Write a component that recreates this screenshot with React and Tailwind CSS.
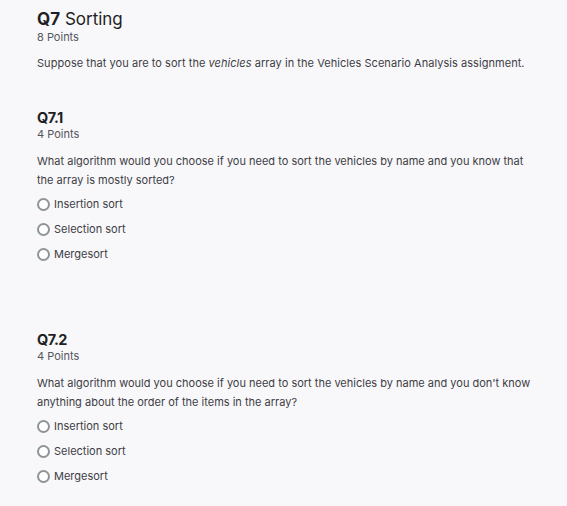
const font = { fontFamily: "Inter, 'Liberation Sans', sans-serif" };

function Radio({ label }) {
  return (
    <label className="flex items-center h-[25px] gap-[4px] text-[11px] text-[#3d3d45]">
      <span className="w-[13px] h-[13px] rounded-full border-2 border-[#8e949a] bg-white shrink-0" />
      <span>{label}</span>
    </label>
  );
}

function SubQuestion({ num, points, text }) {
  return (
    <div>
      <h3 className="text-[14.5px] font-bold text-[#1f1f24] leading-[18px] tracking-[-0.5px]">{num}</h3>
      <div className="text-[11px] text-[#55555c] leading-[14px]">{points}</div>
      <p className="mt-[11px] text-[11px] leading-[19px] text-[#3d3d45]">{text}</p>
      <div className="mt-[2px]">
        <Radio label="Insertion sort" />
        <Radio label="Selection sort" />
        <Radio label="Mergesort" />
      </div>
    </div>
  );
}

export default function App() {
  return (
    <div className="min-h-[506px] bg-[#f8f8fa] pl-[37px] pr-[30px] pt-[8px]" style={font}>
      <h2 className="text-[17px] leading-[22px] text-[#1f1f24]">
        <span className="font-bold">Q7</span> Sorting
      </h2>
      <div className="text-[11px] text-[#55555c] leading-[14px]">8 Points</div>
      <p className="mt-[12px] text-[11px] text-[#3d3d45] leading-[14px] tracking-[0.05px]">
        Suppose that you are to sort the <em>vehicles</em> array in the Vehicles Scenario Analysis assignment.
      </p>
      <div className="mt-[39px]">
        <SubQuestion
          num="Q7.1"
          points="4 Points"
          text="What algorithm would you choose if you need to sort the vehicles by name and you know that the array is mostly sorted?"
        />
      </div>
      <div className="mt-[64px]">
        <SubQuestion
          num="Q7.2"
          points="4 Points"
          text="What algorithm would you choose if you need to sort the vehicles by name and you don't know anything about the order of the items in the array?"
        />
      </div>
    </div>
  );
}
